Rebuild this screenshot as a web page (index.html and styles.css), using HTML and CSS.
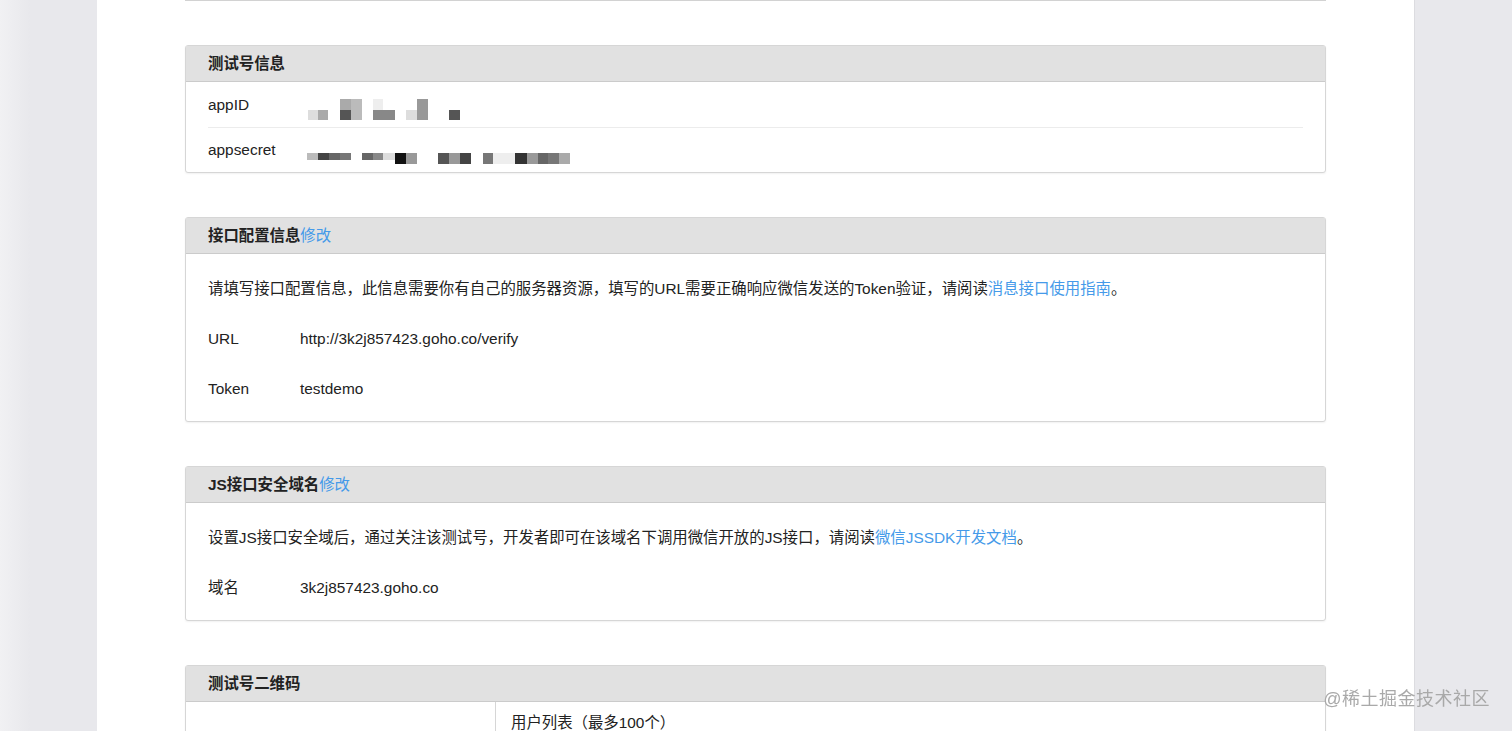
FILE: index.html
```html
<!DOCTYPE html>
<html lang="zh-CN">

<head>
  <meta charset="UTF-8">
  <meta name="viewport" content="width=device-width, initial-scale=1.0">
  <title>微信公众平台测试号</title>
  <link rel="stylesheet" href="styles.css">
</head>

<body>
  <div class="page">
    <div class="prevEnd"></div>

    <div class="panel">
      <div class="panelHead">测试号信息</div>
      <div class="infoRow">
        <span class="label">appID</span>
        <svg class="mosaic" width="180" height="30" viewBox="0 0 180 30">
          <rect x="8" y="20" width="10" height="10" fill="#ddd" />
          <rect x="18" y="20" width="10" height="10" fill="#aaa" />
          <rect x="40" y="9" width="11" height="11" fill="#aaa" />
          <rect x="51" y="9" width="11" height="21" fill="#bbb" />
          <rect x="40" y="20" width="11" height="10" fill="#555" />
          <rect x="73" y="9" width="10" height="11" fill="#eee" />
          <rect x="73" y="20" width="22" height="10" fill="#888" />
          <rect x="106" y="20" width="11" height="10" fill="#ddd" />
          <rect x="117" y="9" width="11" height="21" fill="#999" />
          <rect x="149" y="20" width="11" height="10" fill="#555" />
        </svg>
      </div>
      <div class="infoRow">
        <span class="label">appsecret</span>
        <svg class="mosaic" width="280" height="30" viewBox="0 0 280 30">
          <rect x="7" y="18" width="11" height="7" fill="#bbb" />
          <rect x="18" y="18" width="11" height="7" fill="#444" />
          <rect x="29" y="18" width="11" height="7" fill="#666" />
          <rect x="40" y="18" width="11" height="7" fill="#777" />
          <rect x="62" y="18" width="11" height="7" fill="#666" />
          <rect x="73" y="18" width="10" height="7" fill="#888" />
          <rect x="83" y="18" width="12" height="7" fill="#ddd" />
          <rect x="95" y="18" width="11" height="11" fill="#111" />
          <rect x="106" y="18" width="11" height="11" fill="#999" />
          <rect x="138" y="18" width="11" height="11" fill="#555" />
          <rect x="149" y="18" width="11" height="11" fill="#999" />
          <rect x="160" y="18" width="11" height="11" fill="#444" />
          <rect x="183" y="18" width="10" height="11" fill="#777" />
          <rect x="193" y="18" width="22" height="11" fill="#eee" />
          <rect x="215" y="18" width="12" height="11" fill="#333" />
          <rect x="227" y="18" width="11" height="11" fill="#999" />
          <rect x="238" y="18" width="10" height="11" fill="#666" />
          <rect x="248" y="18" width="11" height="11" fill="#777" />
          <rect x="259" y="18" width="11" height="11" fill="#aaa" />
        </svg>
      </div>
    </div>

    <div class="panel">
      <div class="panelHead">接口配置信息<a class="link" href="#">修改</a></div>
      <div class="panelBody">
        <p class="line">请填写接口配置信息，此信息需要你有自己的服务器资源，填写的URL需要正确响应微信发送的Token验证，请阅读<a class="link" href="#">消息接口使用指南</a>。</p>
        <div class="line"><span class="label">URL</span>http://3k2j857423.goho.co/verify</div>
        <div class="line"><span class="label">Token</span>testdemo</div>
      </div>
    </div>

    <div class="panel">
      <div class="panelHead">JS接口安全域名<a class="link" href="#">修改</a></div>
      <div class="panelBody">
        <p class="line">设置JS接口安全域后，通过关注该测试号，开发者即可在该域名下调用微信开放的JS接口，请阅读<a class="link" href="#">微信JSSDK开发文档</a>。</p>
        <div class="line"><span class="label">域名</span>3k2j857423.goho.co</div>
      </div>
    </div>

    <div class="panel">
      <div class="panelHead">测试号二维码</div>
      <div class="qrBody">
        <div class="qrCell"></div>
        <div class="userCell">用户列表（最多100个）</div>
      </div>
    </div>
  </div>

  <div class="watermark">@稀土掘金技术社区</div>
</body>

</html>
```

FILE: styles.css
```css
html,
body {
  margin: 0;
  height: 100%;
}

body {
  font-family: "Liberation Sans", "Noto Sans CJK SC", sans-serif;
  font-size: 15.4px;
  color: #222;
  background: linear-gradient(to right, #f1f1f3 0, #e8e8ec 30px, #e8e8ec 100%);
  overflow: hidden;
}

.page {
  width: 1318px;
  min-height: 100%;
  margin: 0 auto;
  padding: 0 88px;
  box-sizing: border-box;
  background-color: #fff;
  border-right: 1px solid #dcdce0;
}

.prevEnd {
  height: 1px;
  background-color: #d2d2d2;
}

.panel {
  margin-top: 44px;
  border: 1px solid #d6d6d6;
  border-radius: 3px;
  box-shadow: 0 1px 2px rgba(0, 0, 0, 0.06);
  background-color: #fff;
}

.panelHead {
  height: 35px;
  line-height: 35px;
  padding-left: 22px;
  font-weight: bold;
  background-color: #e1e1e1;
  border-bottom: 1px solid #cbcbcb;
}

.link {
  color: #459ae9;
  text-decoration: none;
  font-weight: normal;
}

.infoRow {
  display: flex;
  align-items: center;
  height: 45px;
  margin: 0 22px;
}

.infoRow + .infoRow {
  border-top: 1px solid #ececec;
  height: 44px;
}

.label {
  display: inline-block;
  width: 92px;
}

.mosaic {
  display: block;
}

.panelBody {
  padding: 10px 22px 7px;
}

.line {
  margin: 0;
  height: 50px;
  line-height: 50px;
}

.qrBody {
  display: flex;
  height: 60px;
}

.qrCell {
  width: 309px;
  border-right: 1px solid #d6d6d6;
}

.userCell {
  padding: 10px 0 0 15px;
  line-height: 22px;
}

.watermark {
  position: fixed;
  right: 22px;
  bottom: 21px;
  font-size: 18px;
  color: #a9a9a9;
  letter-spacing: 0.5px;
}
```
